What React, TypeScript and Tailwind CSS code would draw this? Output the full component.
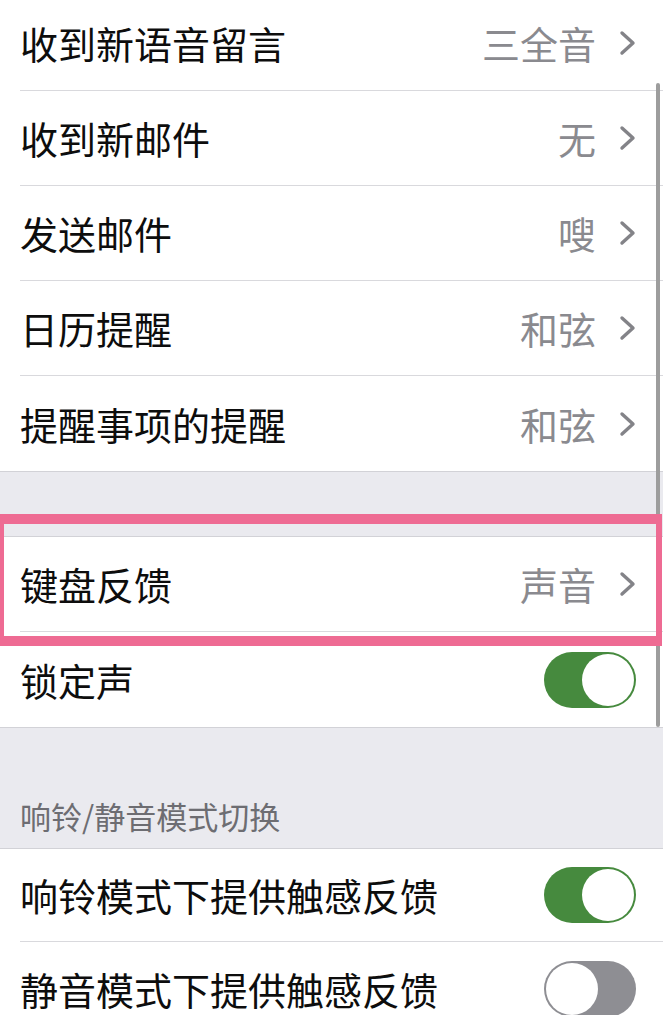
import React from 'react'
import clsx from 'clsx'

type RowProps = {
  label: string
  value?: string
  toggle?: 'on' | 'off'
  divider?: boolean
  height?: string
}

const Chevron = () => (
  <svg width="17" height="26" viewBox="0 0 17 26" className="ml-[23px] shrink-0">
    <polyline points="3,3 14,13 3,23" fill="none" stroke="#838388" strokeWidth="3.4" strokeLinecap="round" strokeLinejoin="round" />
  </svg>
)

const Toggle = ({ on }: { on: boolean }) => (
  <div
    className={clsx(
      'flex h-[56px] w-[92px] shrink-0 items-center rounded-full p-[2px]',
      on ? 'justify-end bg-[#468a3e]' : 'justify-start bg-[#8e8e93]'
    )}
  >
    <div className="h-[52px] w-[52px] rounded-full bg-white" />
  </div>
)

const Row = ({ label, value, toggle, divider = true, height = 'h-[95px]' }: RowProps) => {
  return (
    <div className={clsx('flex bg-white pl-[20px]', height)}>
      <div
        className={clsx(
          'flex flex-1 items-center justify-between pr-[27px]',
          divider && 'border-b border-[#d9d9dd]'
        )}
      >
        <span className="text-[38px] leading-none text-[#0d0d0d]">{label}</span>
        {toggle ? (
          <Toggle on={toggle === 'on'} />
        ) : (
          <div className="flex items-center">
            <span className="text-[38px] leading-none text-[#8a8a8f]">{value}</span>
            <Chevron />
          </div>
        )}
      </div>
    </div>
  )
}

export default function App() {
  return (
    <div className="relative h-[1015px] w-[663px] overflow-hidden bg-[#eaeaef] font-['Noto_Sans_CJK_SC','Noto_Sans',sans-serif]">
      {/* first group */}
      <div className="-mt-[4px] border-b border-[#d2d2d7]">
        <Row label="收到新语音留言" value="三全音" />
        <Row label="收到新邮件" value="无" />
        <Row label="发送邮件" value="嗖" />
        <Row label="日历提醒" value="和弦" />
        <Row label="提醒事项的提醒" value="和弦" divider={false} />
      </div>

      {/* keyboard / lock group */}
      <div className="relative">
        <div className="h-[65px] border-b border-[#d2d2d7]" />
        <Row label="键盘反馈" value="声音" />
        <div className="border-b border-[#d2d2d7]">
          <Row label="锁定声" toggle="on" divider={false} />
        </div>
        {/* highlight frame */}
        <div className="absolute left-0 right-[1px] top-[42px] z-10 h-[132px] border-b-[10px] border-l-[4px] border-r-[6px] border-t-[10px] border-[#ee6b93]" />
      </div>

      {/* ring / silent group */}
      <div className="flex h-[121px] items-end border-b border-[#d2d2d7] pb-[17px] pl-[20px]">
        <span className="text-[31px] leading-none text-[#6d6d72]">响铃/静音模式切换</span>
      </div>
      <Row label="响铃模式下提供触感反馈" toggle="on" height="h-[93px]" />
      <Row label="静音模式下提供触感反馈" toggle="off" height="h-[95px]" />

      {/* scroll indicator */}
      <div className="absolute left-[656px] top-[83px] h-[644px] w-[4px] rounded-full bg-[#9d9d9d]" />
    </div>
  )
}
